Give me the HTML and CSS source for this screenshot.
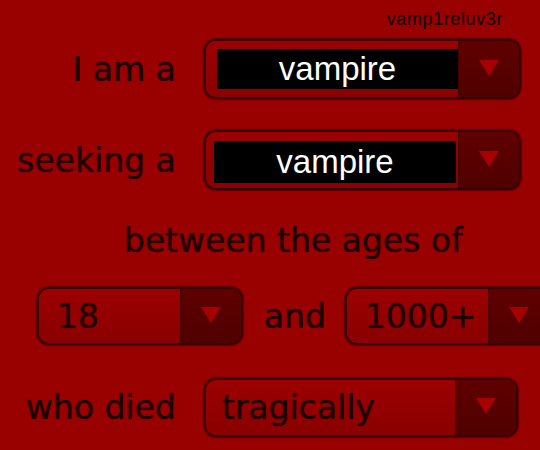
FILE: index.html
```html
<!DOCTYPE html>
<html>
<head>
<meta charset="utf-8">
<link rel="stylesheet" href="styles.css">
</head>
<body>
<div class="page">
  <div class="top"><span class="user">vamp1reluv3r</span></div>
  <div class="row first">
    <span class="label">I am a</span>
    <div class="select wide">
      <div class="face"><div class="field">vampire</div></div>
      <div class="btn"><span class="arrow"></span></div>
    </div>
  </div>
  <div class="row second">
    <span class="label">seeking a</span>
    <div class="select wide">
      <div class="face"><div class="field">vampire</div></div>
      <div class="btn"><span class="arrow"></span></div>
    </div>
  </div>
  <div class="heading">between the ages of</div>
  <div class="row range">
    <div class="select small">
      <div class="face"><span class="value">18</span></div>
      <div class="btn"><span class="arrow"></span></div>
    </div>
    <span class="and">and</span>
    <div class="select small">
      <div class="face"><span class="value">1000+</span></div>
      <div class="btn"><span class="arrow"></span></div>
    </div>
  </div>
  <div class="row last">
    <span class="label">who died</span>
    <div class="select wide died">
      <div class="face"><span class="value">tragically</span></div>
      <div class="btn"><span class="arrow"></span></div>
    </div>
  </div>
</div>
</body>
</html>
```
FILE: styles.css
```css
html, body {
  margin: 0;
  padding: 0;
  overflow: hidden;
  background: #990000;
}
.page {
  width: 540px;
  height: 450px;
  font-family: "DejaVu Sans", Verdana, sans-serif;
  font-size: 33px;
  color: #1c0000;
  text-shadow: 0 0 1px rgba(20,0,0,0.6);
}
.top {
  height: 39px;
  display: flex;
  align-items: center;
  justify-content: flex-end;
  padding-right: 37px;
}
.user {
  font-family: "Liberation Sans", Arial, sans-serif;
  font-size: 18px;
  letter-spacing: 0.6px;
  color: #100000;
  text-shadow: none;
}
.row {
  display: flex;
  align-items: center;
}
.second { margin-top: 31px; }
.label {
  width: 176px;
  text-align: right;
  margin-right: 28px;
}
.select {
  display: flex;
  box-sizing: border-box;
  border: 2px solid #360000;
  border-radius: 12px;
  overflow: hidden;
  box-shadow: 0 0 1px 1px rgba(50,0,0,0.6);
  flex-shrink: 0;
}
.wide { width: 317px; height: 60px; }
.died { width: 314px; height: 59px; }
.small { width: 206px; height: 58px; }
.face {
  flex: 1;
  display: flex;
  align-items: center;
  background: linear-gradient(#9c0000, #8a0000);
}
.wide .face { padding: 8px 0 8px 11px; }
.second .wide .face { padding: 9px 2px 2px 8px; }
.second .wide .face .field { margin-bottom: 3px; }
.field {
  flex: 1;
  align-self: stretch;
  background: #000;
  color: #fff;
  text-shadow: none;
  font-family: "Liberation Sans", Arial, sans-serif;
  font-size: 33px;
  display: flex;
  align-items: center;
  justify-content: center;
}
.value { padding-left: 18px; }
.died .face { padding: 0; }
.died .value { padding-left: 16px; }
.btn {
  width: 61px;
  background: linear-gradient(#600000, #500000);
  border-left: 1px solid #440000;
  display: flex;
  align-items: center;
  justify-content: center;
  padding-bottom: 3px;
  box-sizing: border-box;
}
.arrow {
  width: 0;
  height: 0;
  border-left: 10px solid transparent;
  border-right: 10px solid transparent;
  border-top: 16px solid #a60000;
}
.heading {
  margin-top: 31px;
  height: 40px;
  line-height: 40px;
  padding-left: 124px;
  margin-bottom: 26px;
}
.range { padding-left: 37px; }
.and { margin: 0 19px 0 21px; }
.last { margin-top: 33px; }
```
